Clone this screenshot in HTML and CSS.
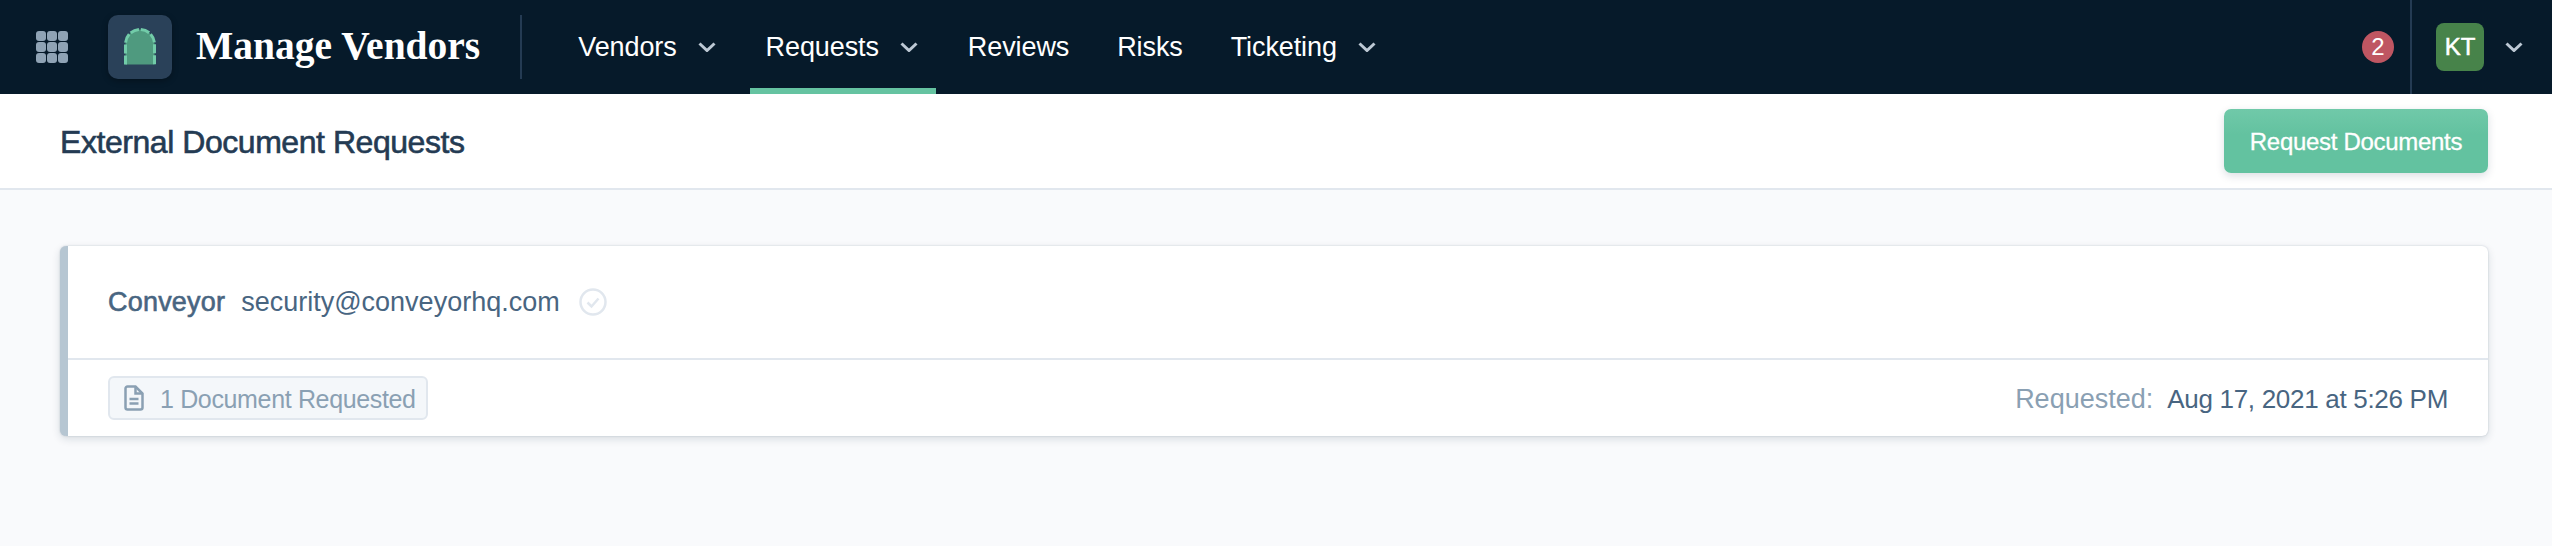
FILE: index.html
```html
<!DOCTYPE html>
<html lang="en">
<head>
    <meta charset="UTF-8">
    <meta name="viewport" content="width=device-width, initial-scale=1.0">
    <title>Manage Vendors</title>
    <link rel="stylesheet" href="styles.css">
</head>
<body>
    <header class="topbar">
        <div class="apps-grid">
            <span></span><span></span><span></span>
            <span></span><span></span><span></span>
            <span></span><span></span><span></span>
        </div>
        <div class="logo">
            <svg width="32" height="38" viewBox="0 0 32 38">
                <path class="arch-fill" d="M1.5 36.5V16a14.5 14.5 0 0 1 29 0v20.500z"/>
                <path class="arch-line" d="M1.5 36.500V16a14.5 14.5 0 0 1 29 0v20.500"/>
            </svg>
        </div>
        <div class="app-name">Manage Vendors</div>
        <nav class="nav">
            <a class="nav-item has-menu">Vendors
                <svg class="chev" width="18" height="10" viewBox="0 0 18 10"><path d="M1.500 1.500L9 8.500l7.500-7"/></svg>
            </a>
            <a class="nav-item has-menu active">Requests
                <svg class="chev" width="18" height="10" viewBox="0 0 18 10"><path d="M1.500 1.500L9 8.500l7.500-7"/></svg>
            </a>
            <a class="nav-item">Reviews</a>
            <a class="nav-item">Risks</a>
            <a class="nav-item has-menu">Ticketing
                <svg class="chev" width="18" height="10" viewBox="0 0 18 10"><path d="M1.500 1.500L9 8.500l7.500-7"/></svg>
            </a>
        </nav>
        <div class="badge">2</div>
        <div class="user">
            <div class="avatar">KT</div>
            <svg class="chev" width="18" height="10" viewBox="0 0 18 10"><path d="M1.500 1.500L9 8.500l7.500-7"/></svg>
        </div>
    </header>

    <div class="page-head">
        <h1>External Document Requests</h1>
        <button class="primary-button">Request Documents</button>
    </div>

    <main class="content">
        <div class="request-card">
            <div class="card-top">
                <span class="vendor-name">Conveyor</span>
                <span class="vendor-email">security@conveyorhq.com</span>
                <svg class="verified" width="28" height="28" viewBox="0 0 28 28">
                    <circle cx="14" cy="14" r="12.500"/>
                    <path d="M8.500 14.500l4 4 7-8"/>
                </svg>
            </div>
            <div class="card-bottom">
                <span class="doc-chip">
                    <svg width="20" height="26" viewBox="0 0 20 26">
                        <path d="M1.500 3.500a2 2 0 0 1 2-2h8l7 7v14a2 2 0 0 1-2 2h-13a2 2 0 0 1-2-2z"/>
                        <path d="M11.500 1.500v7h7M5.500 14h9M5.500 18.500h9"/>
                    </svg>
                    <span class="doc-count">1 Document Requested</span>
                </span>
                <div class="requested">
                    <span class="requested-label">Requested:</span>
                    <span class="requested-date">Aug 17, 2021 at 5:26 PM</span>
                </div>
            </div>
        </div>
    </main>
</body>
</html>
```

FILE: styles.css
```css
body {
    font-family: "Liberation Sans", Arial, sans-serif;
    background-color: #f9fafc;
    margin: 0;
    padding: 0;
    color: #243b53;
}
.topbar {
    display: flex;
    align-items: center;
    height: 94px;
    padding-left: 36px;
    background-color: #061a2a;
}
.apps-grid {
    display: grid;
    grid-template-columns: repeat(3, 10px);
    gap: 1px;
    margin-right: 40px;
}
.apps-grid span {
    height: 10px;
    border-radius: 3px;
    background-color: #8fa3b5;
}
.logo {
    display: flex;
    align-items: center;
    justify-content: center;
    width: 64px;
    height: 64px;
    border-radius: 10px;
    background-color: #2a4159;
    box-shadow: 0 2px 6px rgba(0, 0, 0, 0.3);
    margin-right: 24px;
}
.arch-fill {
    fill: #4f9a7f;
}
.arch-line {
    fill: none;
    stroke: #72cca9;
    stroke-width: 3;
    stroke-dasharray: 9 2;
}
.app-name {
    font-family: "Liberation Serif", serif;
    font-weight: bold;
    font-size: 39.5px;
    color: #fff;
    padding-right: 40px;
    height: 64px;
    line-height: 62px;
    border-right: 2px solid #243b53;
    margin-right: 40px;
}
.nav {
    display: flex;
    align-self: stretch;
    gap: 16px;
    flex: 1;
}
.nav-item {
    display: flex;
    align-items: center;
    gap: 21px;
    padding: 0 16px;
    font-size: 27px;
    letter-spacing: -0.1px;
    color: #fff;
    border-bottom: 6px solid transparent;
    border-top: 6px solid transparent;
}
.nav-item.has-menu {
    padding-right: 18px;
}
.nav-item.active {
    border-bottom-color: #65c3a1;
}
.chev {
    fill: none;
    stroke: #bcc8d4;
    stroke-width: 3;
}
.badge {
    width: 32px;
    height: 32px;
    line-height: 32px;
    border-radius: 50%;
    text-align: center;
    font-size: 24px;
    color: #fff;
    background-color: #bf5662;
    margin-right: 16px;
}
.user {
    display: flex;
    align-items: center;
    align-self: stretch;
    gap: 21px;
    padding: 0 29px 0 24px;
    border-left: 2px solid #243b53;
}
.avatar {
    width: 48px;
    height: 48px;
    line-height: 48px;
    border-radius: 8px;
    text-align: center;
    font-size: 24px;
    -webkit-text-stroke: 0.5px #fff;
    color: #fff;
    background-color: #47834a;
}
.page-head {
    display: flex;
    align-items: center;
    justify-content: space-between;
    height: 94px;
    padding: 0 64px 0 60px;
    background-color: #fff;
    border-bottom: 2px solid #e1e7ee;
}
h1 {
    margin: 0;
    padding-top: 2px;
    font-size: 32px;
    font-weight: normal;
    letter-spacing: -0.45px;
    -webkit-text-stroke: 0.6px #243b53;
    color: #243b53;
}
.primary-button {
    width: 264px;
    height: 64px;
    padding: 2px 0 0;
    border: none;
    border-radius: 7px;
    font-family: inherit;
    font-size: 24px;
    letter-spacing: -0.3px;
    -webkit-text-stroke: 0.3px #fff;
    color: #fff;
    background: linear-gradient(#70c9a9, #63c2a0 40%);
    box-shadow: 0 3px 8px rgba(16, 42, 67, 0.15);
}
.content {
    padding: 56px 64px 110px 60px;
}
.request-card {
    background-color: #fff;
    border-left: 8px solid #b6c6d2;
    border-radius: 6px;
    box-shadow: 0 0 2px rgba(16, 42, 67, 0.2), 0 3px 8px rgba(16, 42, 67, 0.14);
}
.card-top {
    display: flex;
    align-items: center;
    height: 112px;
    padding: 0 40px;
    font-size: 27px;
    color: #486581;
    border-bottom: 2px solid #e1e7ee;
}
.vendor-name {
    letter-spacing: 0.2px;
    -webkit-text-stroke: 0.6px #486581;
    margin-right: 16px;
}
.vendor-email {
    margin-right: 19px;
}
.verified {
    fill: none;
    stroke: #e1e7ee;
    stroke-width: 2.500;
}
.card-bottom {
    display: flex;
    align-items: center;
    justify-content: space-between;
    height: 76px;
    padding: 0 40px;
    font-size: 27px;
}
.doc-chip {
    display: flex;
    align-items: center;
    gap: 16px;
    height: 40px;
    padding: 0 10px 0 14px;
    border: 2px solid #e1e7ee;
    border-radius: 6px;
    background-color: #f4f7fa;
    font-size: 25px;
    letter-spacing: -0.35px;
    color: #8aa0b3;
}
.doc-count {
    padding-top: 2px;
}
.doc-chip svg {
    fill: none;
    stroke: #8aa0b3;
    stroke-width: 2.500;
}
.requested {
    display: flex;
    align-items: baseline;
    gap: 14px;
    padding-top: 2px;
}
.requested-label {
    color: #8aa0b3;
}
.requested-date {
    font-size: 26px;
    letter-spacing: -0.3px;
    color: #486581;
}
```
